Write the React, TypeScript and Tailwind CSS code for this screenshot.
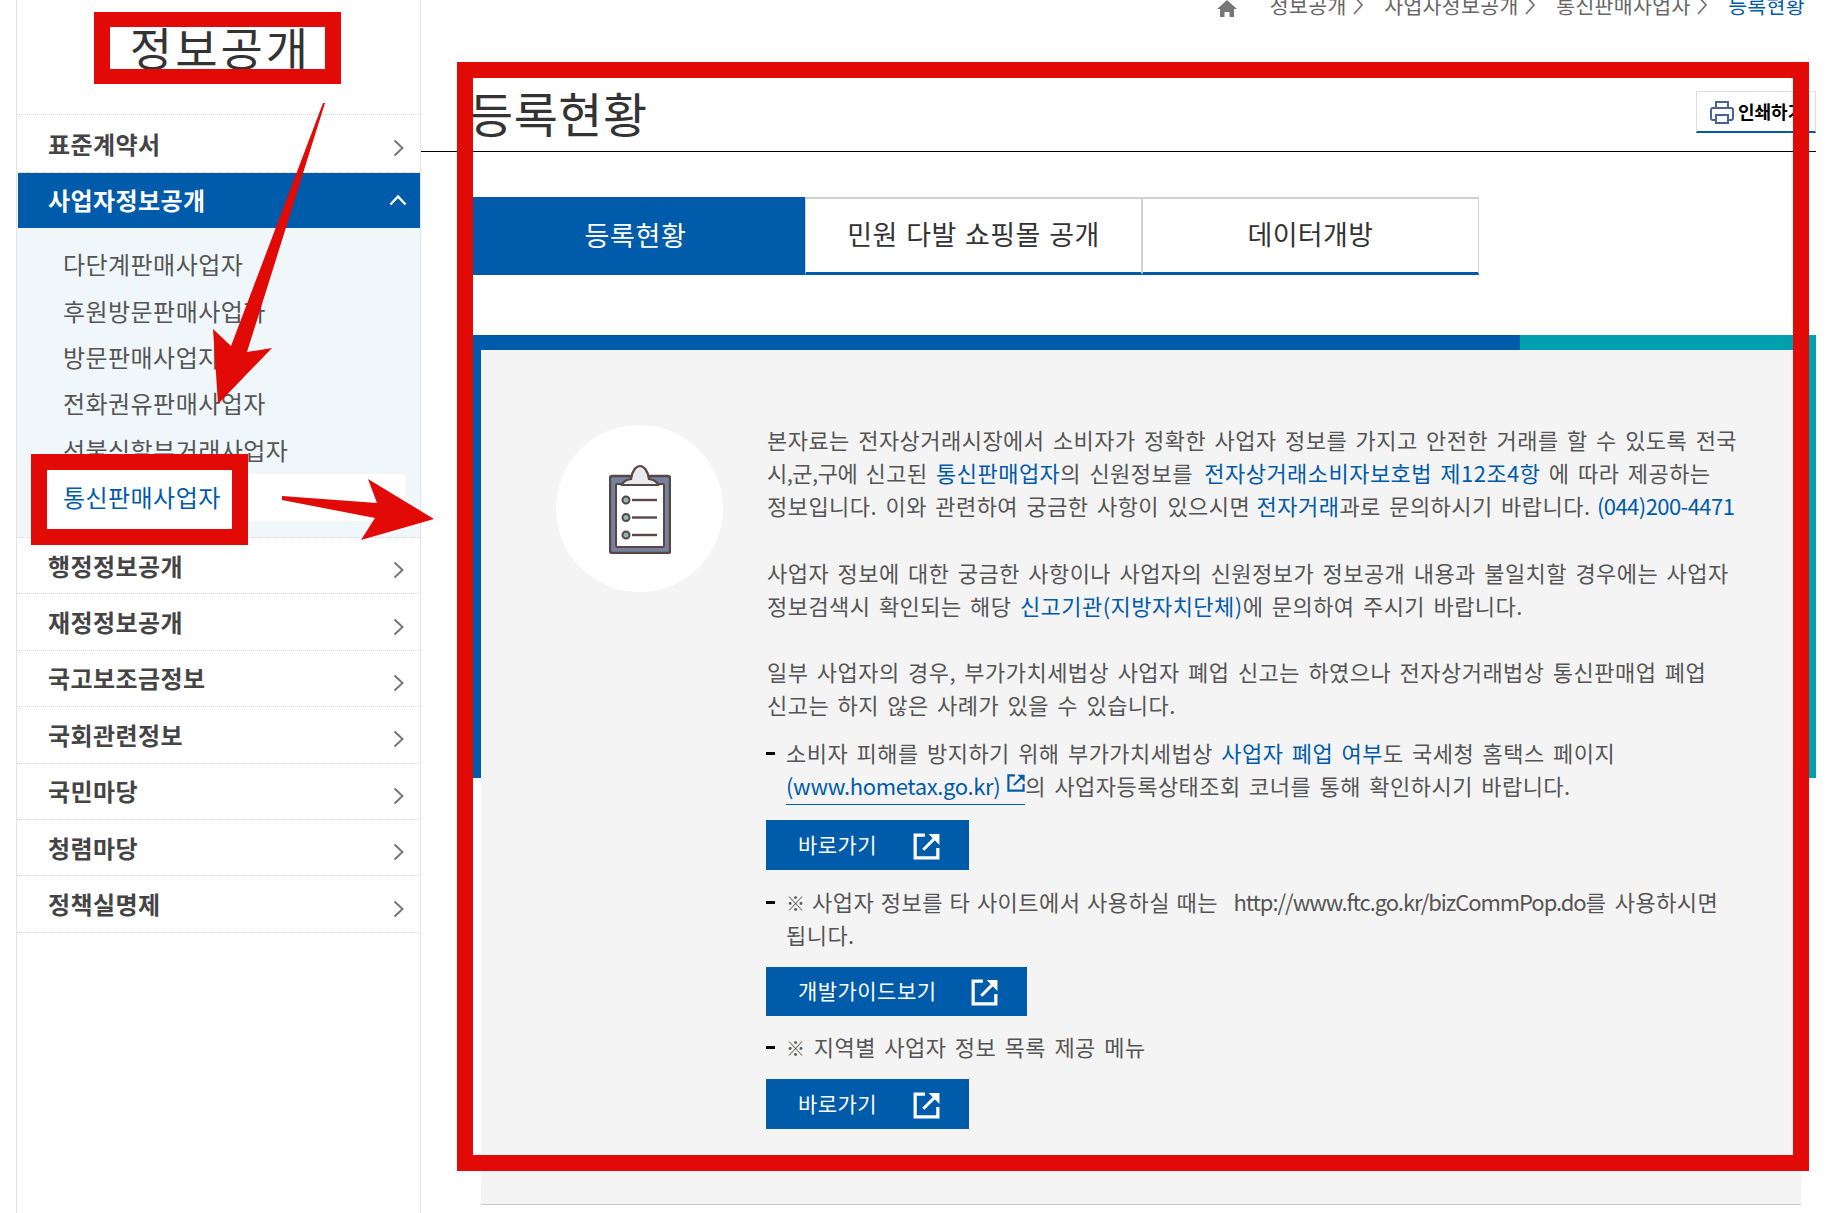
import type { ReactElement, ReactNode } from "react";

const BLUE = "text-[#005baa]";

const ChevronRight = (): ReactElement => (
	<svg className="mt-[9px] shrink-0" fill="none" height="18" viewBox="0 0 11 18" width="11">
		<path d="M1.5 1.5 9.500 9l-8 7.500" stroke="#777" strokeWidth="2" />
	</svg>
);

const ExternalIcon = ({ className }: { className: string }): ReactElement => (
	<svg className={className} fill="none" viewBox="0 0 25 25">
		<path d="M11 2H2v21h21v-9" stroke="currentColor" strokeWidth="3" />
		<path d="M9.500 15.500 21 4" stroke="currentColor" strokeWidth="2.800" />
		<path d="M14.500 1H24.500v10z" fill="currentColor" />
	</svg>
);

const Clipboard = (): ReactElement => (
	<svg fill="none" height="90" viewBox="0 0 62 90" width="62">
		<rect fill="#74829f" height="77" rx="2" stroke="#5a4644" strokeWidth="2.400" width="60" x="1" y="12" />
		<rect fill="#fff" height="63" rx="1.500" stroke="#5a4644" strokeWidth="2" width="48" x="7" y="20" />
		<path
			d="M13 21c1-4 4-5 9-6 1-8 5-13 9-13s8 5 9 13c5 1 8 2 9 6z"
			fill="#e8eaee"
			stroke="#5a4644"
			strokeWidth="2.200"
		/>
		{[36, 53.5, 71].map((y) => (
			<g key={y}>
				<circle cx="17" cy={y} fill="#8fb8b4" r="3.500" stroke="#5a4644" strokeWidth="2" />
				<rect fill="#5a4644" height="2.400" width="25" x="23" y={y - 1.2} />
			</g>
		))}
	</svg>
);

const sideItems = ["행정정보공개", "재정정보공개", "국고보조금정보", "국회관련정보", "국민마당", "청렴마당", "정책실명제"];
const subItems = ["다단계판매사업자", "후원방문판매사업자", "방문판매사업자", "전화권유판매사업자", "선불식할부거래사업자"];

const SideRow = ({ label, height }: { label: string; height: string }): ReactElement => (
	<div className={`flex items-center justify-between border-b border-dotted border-[#d8d8d8] pl-[31px] pr-[16px] ${height}`}>
		<span className="text-[24px] leading-none font-bold tracking-[0.4px] text-[#444]">{label}</span>
		<ChevronRight />
	</div>
);

const Sidebar = (): ReactElement => (
	<aside className="h-full w-[405px] shrink-0 border-x border-[#e4e4e4]">
		<div className="h-[115px] border-b border-dotted border-[#d8d8d8] pl-[4px] pt-[20px] text-center text-[46px] leading-[52px] tracking-[3px] text-[#333]">
			정보공개
		</div>
		<SideRow height="h-[58px]" label="표준계약서" />
		<div className="ml-[1px] flex h-[55px] items-center justify-between bg-[#005baa] pb-[1px] pl-[30px] pr-[13px] text-white">
			<span className="text-[24px] leading-none font-bold tracking-[0.4px]">사업자정보공개</span>
			<svg fill="none" height="12" viewBox="0 0 18 12" width="18">
				<path d="M1.500 10.500 9 2.500l7.500 8" stroke="#fff" strokeWidth="2.400" />
			</svg>
		</div>
		<ul className="h-[310px] border-b border-dotted border-[#d8d8d8] bg-[#eff7fa] pl-[15px] pr-[14px] pt-[13px] text-[24px] tracking-[0.45px] text-[#555]">
			{subItems.map((item) => (
				<li className="flex h-[46.4px] items-center pl-[31px]" key={item}>
					{item}
				</li>
			))}
			<li className={`mt-[1px] flex h-[47px] items-center rounded-[4px] bg-white pl-[31px] ${BLUE}`}>통신판매사업자</li>
		</ul>
		{sideItems.map((item) => (
			<SideRow height="h-[56.4px]" key={item} label={item} />
		))}
	</aside>
);

const Crumb = ({ label }: { label: string }): ReactElement => (
	<span className="flex items-center gap-[6px] text-[#666]">
		{label}
		<svg fill="none" height="20" viewBox="0 0 11 20" width="11">
			<path d="M1 1l8 9-8 9" stroke="#777" strokeWidth="1.800" />
		</svg>
	</span>
);

const Breadcrumb = (): ReactElement => (
	<div className="-mt-[15px] flex h-[44px] items-start justify-end gap-[20.500px] pr-[11px] pt-[10px] text-[20.5px] leading-none tracking-[0.35px]">
		<svg className="mr-[12px] mt-[5px]" height="17" viewBox="0 0 20 17" width="20">
			<path d="M10 0 20 9h-3v8h-4.500v-5h-5v5H3V9H0z" fill="#777" />
		</svg>
		<Crumb label="정보공개" />
		<Crumb label="사업자정보공개" />
		<Crumb label="통신판매사업자" />
		<span className={BLUE}>등록현황</span>
	</div>
);

const Tab = ({ label, active }: { label: string; active?: boolean }): ReactElement =>
	active ? (
		<div className="flex h-[78px] w-[333px] items-center justify-center bg-[#005baa] pb-[2px] pr-[6px] text-[27px] tracking-[0.6px] text-white">{label}</div>
	) : (
		<div className="flex h-[78px] w-[337px] items-center justify-center border-x border-t-2 border-b-[3px] border-x-[#d0d0d0] border-t-[#d0d0d0] border-b-[#005baa] pb-[2px] text-[27px] tracking-[0.4px] text-[#333] [word-spacing:2px]">
			{label}
		</div>
	);

const Link = ({ children }: { children: ReactNode }): ReactElement => <span className={BLUE}>{children}</span>;

const ListItem = ({ children, last }: { children: ReactNode; last?: boolean }): ReactElement => (
	<div className={`relative pl-[19px] ${last ? "mb-[18px]" : "mb-[16px]"}`}>
		<span className="absolute -left-[1px] top-[16px] h-[3px] w-[9px] bg-black" />
		{children}
	</div>
);

const GoButton = ({ label, width, height, gap }: { label: string; width: string; height: string; gap: string }): ReactElement => (
	<div className={`-ml-[1px] flex items-center justify-between bg-[#005baa] pl-[32px] pr-[29px] text-[21px] leading-none text-white ${gap} ${width} ${height}`}>
		<span className="-mt-[2px]">{label}</span>
		<ExternalIcon className="mt-[2px] h-[27px] w-[27px]" />
	</div>
);

const InfoPanel = (): ReactElement => (
	<div className="flex h-[855px] w-[1320px] border-b border-[#c8c8c8] bg-[#f4f4f4] pl-[75px] pt-[75px]">
		<div className="flex h-[167px] w-[167px] shrink-0 items-center justify-center rounded-full bg-white">
			<Clipboard />
		</div>
		<div className="-mt-[2px] ml-[44px] whitespace-nowrap text-[22px] leading-[33px] tracking-[0.46px] text-[#555] [word-spacing:3px]">
			<p className="mb-[34px]">
				본자료는 전자상거래시장에서 소비자가 정확한 사업자 정보를 가지고 안전한 거래를 할 수 있도록 전국
				<br />
				<span className="tracking-[-0.5px]">시,군,구에</span> 신고된 <Link>통신판매업자</Link>의 신원정보를{" "}
				<span className={`ml-[3px] ${BLUE}`}>전자상거래소비자보호법 제12조4항</span> 에 따라 제공하는
				<br />
				정보입니다. 이와 관련하여 궁금한 사항이 있으시면 <span className={`-ml-[2px] ${BLUE}`}>전자거래</span>과로 문의하시기 바랍니다.{" "}
				<span className={`-ml-[2px] tracking-[-0.55px] ${BLUE}`}>(044)200-4471</span>
			</p>
			<p className="mb-[33px]">
				사업자 정보에 대한 궁금한 사항이나 사업자의 신원정보가 정보공개 내용과 불일치할 경우에는 사업자
				<br />
				정보검색시 확인되는 해당 <Link>신고기관(지방자치단체)</Link>에 문의하여 주시기 바랍니다.
			</p>
			<p className="mb-[15px]">
				일부 사업자의 경우, 부가가치세법상 사업자 폐업 신고는 하였으나 전자상거래법상 통신판매업 폐업
				<br />
				신고는 하지 않은 사례가 있을 수 있습니다.
			</p>
			<ListItem last>
				소비자 피해를 방지하기 위해 부가가치세법상 <Link>사업자 폐업 여부</Link>도 국세청 홈택스 페이지
				<br />
				<span className={`border-b border-[#005baa] pb-[3px] ${BLUE}`}>
					<span className="tracking-[-0.35px]">(www.hometax.go.kr)</span>
					<ExternalIcon className="ml-[7px] inline-block h-[18px] w-[18px] align-[3px]" />
				</span>
				의 사업자등록상태조회 코너를 통해 확인하시기 바랍니다.
			</ListItem>
			<GoButton gap="mb-[15px]" height="h-[50px]" label="바로가기" width="w-[203px]" />
			<ListItem>
				<span className="text-[19px] leading-none">※</span>
				<span className="[word-spacing:1.25px]"> 사업자 정보를 타 사이트에서 사용하실 때는 </span>
				<span className="ml-[9px] tracking-[-1.05px]">http://www.ftc.go.kr/bizCommPop.do</span>를 사용하시면
				<br />
				됩니다.
			</ListItem>
			<GoButton gap="mb-[14px]" height="h-[49px]" label="개발가이드보기" width="w-[261px]" />
			<ListItem>
				<span className="text-[19px] leading-none">※</span> 지역별 사업자 정보 목록 제공 메뉴
			</ListItem>
			<GoButton gap="mb-[14px]" height="h-[50px]" label="바로가기" width="w-[203px]" />
		</div>
	</div>
);

const Annotations = (): ReactElement => (
	<>
		<div className="absolute left-[94px] top-[12px] h-[72px] w-[247px] border-x-[16px] border-y-[15px] border-[#e10a07]" />
		<div className="absolute left-[31px] top-[454px] flex h-[91px] w-[217px] items-center border-[16px] border-[#e10a07] bg-white pb-[5px] pl-[16px] text-[24px] tracking-[0.45px] text-[#005baa]">
			통신판매사업자
		</div>
		<div className="absolute left-[457px] top-[62px] h-[1109px] w-[1352px] border-[16px] border-[#e10a07]" />
		<svg className="absolute left-0 top-0" height="600" width="460">
			<polygon fill="#e10a07" points="323,103 325,103 247,352 272,348 218,404 213,329 231,346" />
			<polygon fill="#e10a07" points="282,496 377,503 368,479 434,519 361,540 375,518 282,500" />
		</svg>
	</>
);

export default function App(): ReactElement {
	return (
		<div className="relative flex h-[1213px] w-[1841px] overflow-hidden bg-white pl-[16px] font-['Noto_Sans_CJK_KR','Noto_Sans',sans-serif]">
			<Sidebar />
			<main className="w-[1395px] shrink-0">
				<Breadcrumb />
				<div className="flex h-[123px] items-start justify-between border-b border-black pl-[48px]">
					<h1 className="mt-[52px] text-[48px] leading-[62px] tracking-[0.5px] text-[#333]">등록현황</h1>
					<div className="mt-[62px] flex h-[42px] w-[120px] items-center gap-[4px] border border-b-2 border-[#ddd] border-b-[#005baa] pl-[13px] text-[18px] font-bold text-black">
						<svg fill="none" height="24" stroke="#4a6491" strokeWidth="2" viewBox="0 0 24 24" width="24">
							<path d="M6 8V2h12v6" />
							<rect height="12" rx="2" width="22" x="1" y="8" />
							<path d="M6 15h12v8H6z" fill="#fff" />
						</svg>
						<span className="whitespace-nowrap">인쇄하기</span>
					</div>
				</div>
				<div className="pl-[51px]">
					<div className="mt-[45px] flex">
						<Tab active label="등록현황" />
						<Tab label="민원 다발 쇼핑몰 공개" />
						<Tab label="데이터개방" />
					</div>
					<div className="mt-[60px] flex h-[15px]">
						<div className="w-[1048px] bg-[#005baa]" />
						<div className="w-[296px] bg-[#00a0b0]" />
					</div>
					<div className="flex">
						<div className="h-[428px] w-[9px] bg-[#005baa]" />
						<InfoPanel />
						<div className="h-[428px] w-[15px] bg-[#00a0b0]" />
					</div>
				</div>
			</main>
			<Annotations />
		</div>
	);
}
